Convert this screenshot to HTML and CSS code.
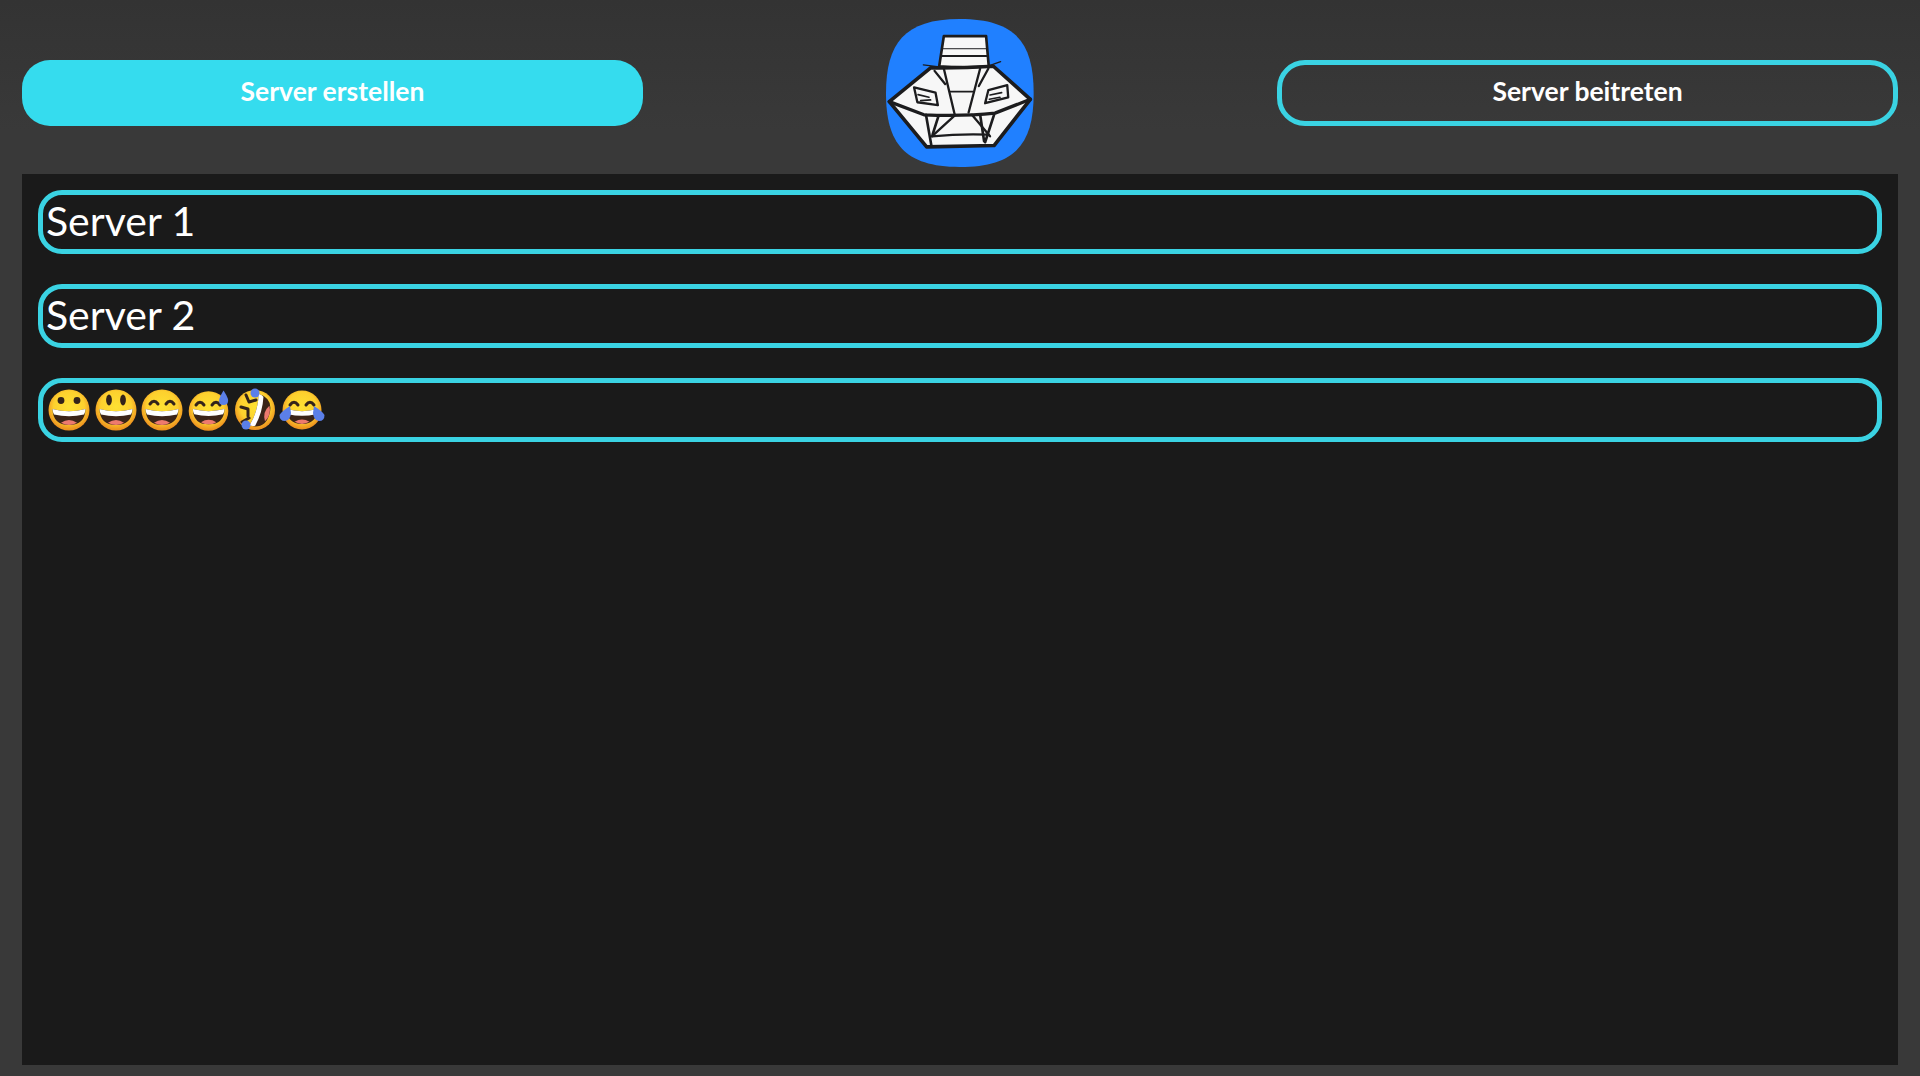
FILE: index.html
```html
<!DOCTYPE html>
<html lang="de">
<head>
<meta charset="utf-8">
<title>Server</title>
<link rel="stylesheet" href="styles.css">
</head>
<body>
<div class="page">
  <header class="top">
    <button class="btn btn-fill">Server erstellen</button>
    <svg class="logo" viewBox="75 54 448 450" role="img" aria-label="Logo">
      <path class="logo-bg" d="M298 55C470 55 522 130 522 280C522 430 470 503 298 503C130 503 75 430 75 280C75 130 130 55 298 55Z"/>
      <path class="logo-w" d="M250 107H378L386 198L400 198L512 298L402 438L198 442L85 305L210 203L236 198Z"/>
      <g class="logo-l">
        <path class="l8" d="M250 107H378L386 198Q310 204 236 198Z"/>
        <path class="l11" d="M210 203L85 305L198 442L402 438L512 298L400 198Q310 204 210 203Z"/>
        <path class="l3" d="M247 145H380"/>
        <path class="l6" d="M242 167H383"/>
        <path class="l4" d="M188 194L236 200M386 197L422 184"/>
        <path class="l7" d="M222 212L254 252M250 205L282 340M360 205L325 338M385 205L356 258"/>
        <path class="l5" d="M270 275H338"/>
        <path class="l10" d="M85 305L190 345Q310 350 405 340L512 298"/>
        <path class="l8" d="M196 345L212 436M234 348L216 405M402 345L375 428M360 345L372 425"/>
        <path class="l7" d="M285 345L214 410M335 345L390 410"/>
        <path class="l7" d="M214 410Q300 402 385 405"/>
        <path class="l7" d="M160 262L225 278L232 316L170 307Z"/>
        <path class="l5" d="M172 284L205 292M180 302L210 300"/>
        <path class="l7" d="M385 270L442 255L445 292L375 310Z"/>
        <path class="l5" d="M390 285L425 278M388 298L420 292"/>
      </g>
    </svg>
    <button class="btn btn-line">Server beitreten</button>
  </header>
  <main class="panel">
    <div class="server">Server 1</div>
    <div class="server">Server 2</div>
    <div class="server server-emoji">
      <svg class="emoji" viewBox="0 0 42 42" role="img" aria-label="😀">
        <defs>
          <radialGradient id="skin" cx="50%" cy="42%" r="55%">
            <stop offset="0" stop-color="#fee133"/><stop offset=".68" stop-color="#fdd02e"/><stop offset="1" stop-color="#ee9420"/>
          </radialGradient>
          <g id="mouth">
            <path fill="#3a2418" d="M4.500 20Q21 24.500 37.500 20Q37 36 21 36Q5 36 4.500 20Z"/>
            <path fill="#fff" d="M4.500 20Q21 24.500 37.500 20Q37.300 23.500 36 25.500Q21 29 6 25.500Q4.700 23.500 4.500 20Z"/>
            <path fill="#ee7a6e" d="M13 33.700Q21 28.500 29 33.700Q25 36 21 36Q17 36 13 33.700Z"/>
          </g>
          <g id="smile"><path class="eye-arc" d="M9 15Q13 9.500 17 15M25 15Q29 9.500 33 15"/></g>
        </defs>
        <circle cx="21" cy="21" r="20.500" fill="url(#skin)"/>
        <use href="#mouth"/>
        <circle cx="13" cy="11.500" r="3.400" class="ink"/><circle cx="29" cy="11.500" r="3.400" class="ink"/>
      </svg>
      <svg class="emoji" viewBox="0 0 42 42" role="img" aria-label="😃">
        <circle cx="21" cy="21" r="20.500" fill="url(#skin)"/>
        <use href="#mouth"/>
        <ellipse cx="14" cy="11" rx="2.900" ry="5.400" class="ink"/><ellipse cx="28" cy="11" rx="2.900" ry="5.400" class="ink"/>
      </svg>
      <svg class="emoji" viewBox="0 0 42 42" role="img" aria-label="😄">
        <circle cx="21" cy="21" r="20.500" fill="url(#skin)"/>
        <use href="#mouth"/>
        <use href="#smile"/>
      </svg>
      <svg class="emoji" viewBox="0 0 42 42" role="img" aria-label="😅">
        <circle cx="20.500" cy="22" r="19.800" fill="url(#skin)"/>
        <use href="#mouth" transform="translate(.5 .8) scale(.96)"/>
        <use href="#smile" transform="translate(-1 1)"/>
        <path class="tear" d="M35.500 1.500Q42 11 39.500 14.500Q35.500 17.500 31.500 14.500Q29.500 11 35.500 1.500Z"/>
      </svg>
      <svg class="emoji" viewBox="0 0 42 42" role="img" aria-label="🤣">
        <circle cx="21" cy="21" r="20" fill="url(#skin)"/>
        <g transform="rotate(-74 21 21)">
          <use href="#mouth"/>
        </g>
        <path class="eye-x" d="M12 6L15 13L22 11M7 18L14 20L14 27M15 29L8 33"/>
        <circle cx="21" cy="4" r="4.500" class="tear"/><circle cx="12" cy="36" r="4.500" class="tear"/>
      </svg>
      <svg class="emoji" viewBox="0 0 42 42" role="img" aria-label="😂">
        <circle cx="21" cy="21" r="19.500" fill="url(#skin)"/>
        <use href="#mouth" transform="translate(1.500 1.500) scale(.93)"/>
        <use href="#smile" transform="translate(0 1)"/>
        <path class="tear" d="M9 17Q1 22 -1.500 26Q-1.500 32 4 32Q9.500 31 10 24Z"/>
        <path class="tear" d="M33 17Q41 22 43.500 26Q43.500 32 38 32Q32.500 31 32 24Z"/>
      </svg>
    </div>
  </main>
</div>
</body>
</html>
```

FILE: styles.css
```css
* { box-sizing: border-box; }
html, body { margin: 0; height: 100%; }
body { background: linear-gradient(#333333, #393939 130px); font-family: "Lato", "Noto Sans", sans-serif; color: #fff; overflow: hidden; }
.page { height: 1076px; padding: 18px 22px 11px; display: flex; flex-direction: column; }
.top { height: 156px; flex: none; display: flex; justify-content: space-between; align-items: flex-start; }
.btn { width: 621px; height: 66px; margin-top: 42px; padding: 0 0 4px; border-radius: 28px; font: 700 26.500px "Lato", sans-serif; color: #fff; display: block; }
.btn-fill { background: #35dcee; border: 0; }
.btn-line { background: transparent; border: 5px solid #3ad3e3; }
.logo { width: 148px; height: 150px; display: block; }
.logo-bg { fill: #2080ff; }
.logo-w { fill: #f7f7f7; }
.logo-l path { fill: none; stroke: #1c1c1e; stroke-linejoin: round; stroke-linecap: round; }
.logo-l .l11 { stroke-width: 11; }
.logo-l .l10 { stroke-width: 10; }
.logo-l .l8 { stroke-width: 8; }
.logo-l .l7 { stroke-width: 7; }
.logo-l .l6 { stroke-width: 6; }
.logo-l .l5 { stroke-width: 5; }
.logo-l .l4 { stroke-width: 4; }
.logo-l .l3 { stroke-width: 3; }
.panel { flex: 1; background: #1a1a1a; padding: 16px; display: flex; flex-direction: column; gap: 30px; }
.server { height: 64px; border: 5px solid #3ad3e3; border-radius: 24px; padding: 0 0 4px 3px; display: flex; align-items: center; font-size: 41px; line-height: 1; }
.server-emoji { gap: 4.600px; padding: 0 0 0 5px; }
.emoji { width: 42px; height: 42px; flex: none; display: block; overflow: visible; }
.ink { fill: #33231a; }
.eye-arc { fill: none; stroke: #33231a; stroke-width: 3; stroke-linecap: round; }
.eye-x { fill: none; stroke: #33231a; stroke-width: 3; stroke-linecap: round; stroke-linejoin: round; }
.tear { fill: #5b7fe8; }
```
